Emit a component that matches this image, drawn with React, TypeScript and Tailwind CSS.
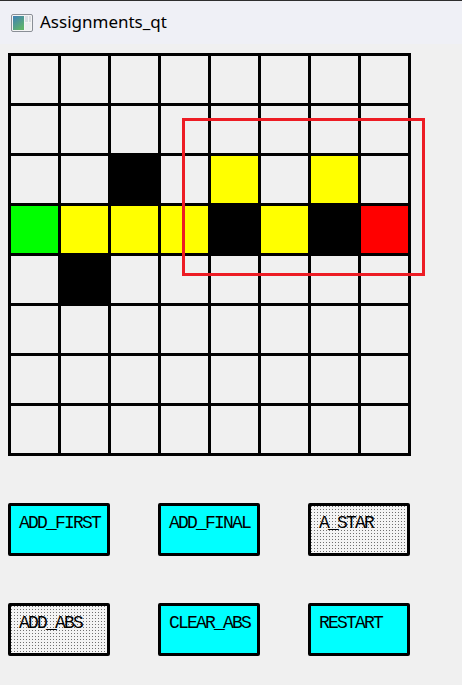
import React from 'react'

type Cell = '' | 'b' | 'y' | 'g' | 'r'

const rows: Cell[][] = [
  ['', '', '', '', '', '', '', ''],
  ['', '', '', '', '', '', '', ''],
  ['', '', 'b', '', 'y', '', 'y', ''],
  ['g', 'y', 'y', 'y', 'b', 'y', 'b', 'r'],
  ['', 'b', '', '', '', '', '', ''],
  ['', '', '', '', '', '', '', ''],
  ['', '', '', '', '', '', '', ''],
  ['', '', '', '', '', '', '', ''],
]

const cellColor: Record<Cell, string> = {
  '': 'bg-[#f0f0f0]',
  b: 'bg-black',
  y: 'bg-[#ffff00]',
  g: 'bg-[#00ff00]',
  r: 'bg-[#ff0000]',
}

const buttons = [
  { label: 'ADD_FIRST', dotted: false },
  { label: 'ADD_FINAL', dotted: false },
  { label: 'A_STAR', dotted: true },
  { label: 'ADD_ABS', dotted: true },
  { label: 'CLEAR_ABS', dotted: false },
  { label: 'RESTART', dotted: false },
]

const AppIcon = () => (
  <svg width="22" height="18" viewBox="0 0 22 18">
    <defs>
      <linearGradient id="ig" x1="0" y1="0" x2="0.6" y2="1">
        <stop offset="0" stopColor="#3f7fb8" />
        <stop offset="1" stopColor="#5fb36a" />
      </linearGradient>
    </defs>
    <rect x="0.5" y="0.5" width="21" height="17" rx="1.5" fill="#f4f4f4" stroke="#8a8f96" />
    <rect x="2" y="2" width="11" height="14" fill="url(#ig)" />
    <rect x="14" y="2" width="3" height="6" fill="#d9dde2" />
    <rect x="18" y="2" width="2" height="6" fill="#d9dde2" />
    <rect x="14" y="9" width="6" height="7" fill="#eceef0" />
  </svg>
)

const App = () => {
  return (
    <div className="w-[462px] h-[685px] bg-[#f0f0f0] overflow-hidden">
      <div className="h-[44px] bg-[#eff0f6] border-t border-[#2e2e2e] flex items-center pl-[11px]">
        <AppIcon />
        <span className="ml-[7px] text-[17px] text-black font-['Noto_Sans',sans-serif] leading-none pb-[2px]">
          Assignments_qt
        </span>
      </div>

      <div className="relative ml-[8px] mt-[9px] w-[403px]">
        <div className="grid grid-cols-[repeat(8,47px)] gap-[3px] p-[3px] bg-black w-[403px]">
          {rows.flat().map((c, i) => (
            <div key={i} className={`h-[47px] ${cellColor[c]}`} />
          ))}
        </div>
        <div className="absolute left-[174px] top-[65px] w-[243px] h-[158px] border-[3px] border-[#ed1c24]" />
      </div>

      <div className="ml-[8px] mt-[47px] grid grid-cols-[repeat(3,102px)] gap-x-[48px] gap-y-[47px]">
        {buttons.map((b) => (
          <div
            key={b.label}
            className={
              b.dotted
                ? "h-[53px] border-[3px] border-black rounded-[2px] pl-[8px] pt-[4px] bg-[#f4f4f4] bg-[conic-gradient(from_270deg_at_1px_1px,#707070_25%,transparent_0)] bg-size-[3px_3px]"
                : 'h-[53px] border-[3px] border-black rounded-[2px] pl-[8px] pt-[4px] bg-[#00ffff]'
            }
          >
            <span className="font-['Liberation_Mono',monospace] text-[18px] tracking-[-1.8px] leading-[20px] text-black">
              {b.label}
            </span>
          </div>
        ))}
      </div>
    </div>
  )
}

export default App
